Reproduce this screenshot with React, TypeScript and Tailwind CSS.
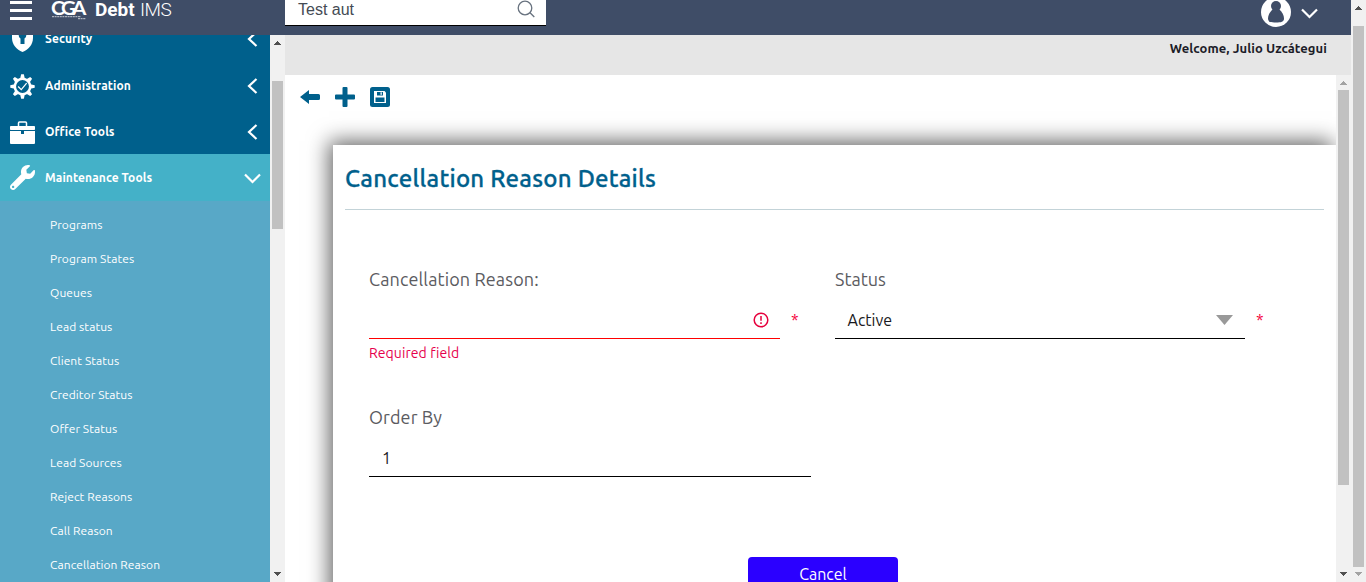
import React from "react";

const UI = "font-['Ubuntu','Noto_Sans',sans-serif]";

function ChevronLeft() {
  return (
    <svg width="11" height="16" viewBox="0 0 11 16" fill="none" stroke="#fff" strokeWidth="2.2" className="mr-[2px]">
      <path d="M9.5 1 L2 8 L9.5 15" />
    </svg>
  );
}

function ChevronDown({ className = "" }: { className?: string }) {
  return (
    <svg width="17" height="11" viewBox="0 0 17 11" fill="none" stroke="#fff" strokeWidth="2.2" className={className}>
      <path d="M1 1.5 L8.5 9 L16 1.5" />
    </svg>
  );
}

function Arrow({ up = false, color }: { up?: boolean; color: string }) {
  return (
    <svg width="7" height="4" viewBox="0 0 7 4" shapeRendering="crispEdges" className="shrink-0">
      <path d={up ? "M3 0h1v1h1v1h1v1h1v1H0V3h1V2h1V1h1z" : "M0 0h7v1H6v1H5v1H4v1H3V3H2V2H1V1H0z"} fill={color} />
    </svg>
  );
}

const ShieldIcon = () => (
  <svg width="25" height="26" viewBox="0 0 25 26" fill="none">
    <path d="M12.500 0 L23 3.500 V12 C23 18.500 18.500 23.500 12.500 26 C6.500 23.500 2 18.500 2 12 V3.500 Z" fill="#fff" />
    <path d="M12.500 6 a3.500 3.500 0 0 1 2 6.500 V18 h-4 V12.500 a3.500 3.500 0 0 1 2-6.500z" fill="#00608c" />
  </svg>
);

const GearIcon = () => (
  <svg width="25" height="25" viewBox="0 0 26 26" fill="none">
    <g fill="#fff">
      {[0, 45, 90, 135, 180, 225, 270, 315].map((a) => (
        <path key={a} transform={`rotate(${a} 13 13)`} d="M11.600 0.300 h2.800 l1 4.500 h-4.800z" />
      ))}
    </g>
    <circle cx="13" cy="13" r="8" stroke="#fff" strokeWidth="2.600" />
    <path d="M8.500 13 l3.200 3.200 L17.300 9.500" stroke="#fff" strokeWidth="1.300" />
  </svg>
);

const CaseIcon = () => (
  <svg width="25" height="23" viewBox="0 0 25 23" fill="none">
    <path d="M8.500 5 V2 Q8.500 1 9.500 1 H15.500 Q16.500 1 16.500 2 V5" stroke="#fff" strokeWidth="1.500" />
    <rect y="5" width="25" height="4" rx="0.800" fill="#fff" />
    <path d="M0 10 h11 v3 h3 v-3 h11 v12 a1 1 0 0 1 -1 1 H1 a1 1 0 0 1 -1 -1z" fill="#fff" />
    <rect x="11" y="9" width="3" height="4" fill="#00608c" />
  </svg>
);

const WrenchIcon = () => (
  <svg width="25" height="25" viewBox="0 0 512 512" fill="#fff">
    <path d="M507.730 109.100c-2.240-9.030-13.540-12.090-20.120-5.510l-74.360 74.360-67.880-11.310-11.310-67.880 74.360-74.360c6.620-6.620 3.430-17.900-5.660-20.160-47.380-11.740-99.550.91-136.580 37.930-39.640 39.640-50.550 97.100-34.050 147.200L18.740 402.760c-24.990 24.990-24.990 65.510 0 90.500 24.990 24.990 65.510 24.990 90.500 0l213.210-213.210c50.120 16.710 107.470 5.680 147.370-34.220 37.070-37.070 49.700-89.320 37.910-136.730zM64 472c-13.250 0-24-10.750-24-24 0-13.260 10.750-24 24-24s24 10.740 24 24c0 13.250-10.750 24-24 24z" />
  </svg>
);

const sections = [
  { label: "Security", icon: <ShieldIcon />, height: "h-[46px]" },
  { label: "Administration", icon: <GearIcon />, height: "h-[48px]" },
  { label: "Office Tools", icon: <CaseIcon />, height: "h-[44px]" },
];

const links = [
  "Programs",
  "Program States",
  "Queues",
  "Lead status",
  "Client Status",
  "Creditor Status",
  "Offer Status",
  "Lead Sources",
  "Reject Reasons",
  "Call Reason",
  "Cancellation Reason",
];

function Header() {
  return (
    <header className="flex h-[35px] shrink-0 items-start bg-[#3f4d67]">
      <div className="flex w-[285px] items-start">
        <div className="ml-[10px] mt-px flex w-[22px] flex-col gap-[5px]">
          <i className="h-[3px] bg-white" />
          <i className="h-[3px] bg-white" />
          <i className="h-[3px] bg-white" />
        </div>
        <svg width="36" height="20" viewBox="0 0 36 20" className="ml-[19px]">
          <text transform="scale(1.15 1)" x="0 8.800 18.200" y="15.200" fill="#fff" fontFamily="Lato" fontWeight="700" fontSize="18">CGA</text>
          <path d="M1 16.700 H30 M27 18.700 H35" stroke="#c4cad3" strokeWidth="1" strokeDasharray="2 0.600" />
        </svg>
        <div className="ml-[8px] flex font-['Roboto',sans-serif] text-[19px] leading-[20px] text-white">
          <span className="w-[45px] font-bold">Debt</span>
          <span className="font-light tracking-[-0.5px]">IMS</span>
        </div>
      </div>
      <div className="flex h-[26px] w-[261px] items-start justify-between border-b border-black bg-white pl-[13px] pr-[11px]">
        <span className="font-['Liberation_Sans',sans-serif] text-[16px] leading-[19px] text-[#444b54]">Test aut</span>
        <svg width="18" height="18" viewBox="0 0 18 18" fill="none" stroke="#68727f" strokeWidth="1.300">
          <circle cx="8" cy="8" r="6.800" />
          <path d="M12.800 12.500 L17.300 17" />
        </svg>
      </div>
      <svg width="30" height="27" viewBox="0 0 30 27" className="ml-auto">
        <circle cx="15" cy="12" r="15" fill="#fff" />
        <circle cx="15" cy="6" r="5" fill="#3f4d67" />
        <path d="M12 9 H18 C21 12 23 15 23 18.500 C23 22 20 22.500 15 22.500 C10 22.500 7 22 7 18.500 C7 15 9 12 12 9z" fill="#3f4d67" />
      </svg>
      <ChevronDown className="ml-[9.500px] mr-[33.500px] mt-[8px]" />
    </header>
  );
}

function Sidebar() {
  return (
    <aside className="flex w-[285px] shrink-0 overflow-hidden">
      <nav className="w-[270px] bg-[#00608c] text-white">
        <div className="-mt-[19px]">
          {sections.map((s) => (
            <div key={s.label} className={`${s.height} flex items-center pl-[10px] pr-[10px]`}>
              <span className="flex w-[35px]">{s.icon}</span>
              <span className="flex-1 text-[12px] font-bold leading-[16px] tracking-[0.1px]">{s.label}</span>
              <ChevronLeft />
            </div>
          ))}
        </div>
        <div className="flex h-[47px] items-center bg-[#44b1c8] pl-[10px] pr-[9px]">
          <span className="flex w-[35px]"><WrenchIcon /></span>
          <span className="flex-1 text-[12px] font-bold leading-[16px] tracking-[0.1px]">Maintenance Tools</span>
          <ChevronDown className="mt-[2px]" />
        </div>
        <div className="h-[400px] bg-[#58a8c7] pl-[50px] pt-[7px]">
          {links.map((l) => (
            <div key={l} className="flex h-[34px] items-center text-[12px] tracking-[0.08px]">{l}</div>
          ))}
        </div>
      </nav>
      <div className="flex w-[15px] flex-col items-center bg-[#f1f1f1] pb-[6px] pt-[6px]">
        <Arrow up color="#505050" />
        <i className="mt-[36px] h-[148px] w-[11px] bg-[#c1c1c1]" />
        <span className="flex-1" />
        <Arrow color="#505050" />
      </div>
    </aside>
  );
}

function Details() {
  return (
    <section className="ml-[48px] mt-[35px] h-[500px] bg-white px-3 pt-[14px] shadow-[-4px_-4px_20px_rgba(0,0,0,0.6)]">
      <h1 className="h-[51px] border-b border-[#c3d3d8] text-[24px] font-medium leading-[40px] tracking-[0.24px] text-[#00608c] [-webkit-text-stroke:0.3px_#00608c]">Cancellation Reason Details</h1>
      <div className="flex pl-6 pt-[57px]">
        <div className="w-[466px]">
          <div className="text-[18px] leading-6 tracking-[0.12px] text-[#5b5b5f]">Cancellation Reason:</div>
          <div className="mt-[11px] flex">
            <div className="flex h-[37px] w-[411px] items-center justify-end border-b border-b-[#ff0000] pr-[11px]">
              <svg width="16" height="16" viewBox="0 0 16 16" fill="none" stroke="#e6003c" strokeWidth="1.500">
                <circle cx="8" cy="8" r="6.800" />
                <path d="M8 4v4.800M8 10.200v1.800" />
              </svg>
            </div>
            <span className="ml-[11px] mt-[6px] text-[16px] leading-6 text-[#f5003d]">*</span>
          </div>
          <div className="mt-1 text-[14px] leading-5 tracking-[0.08px] text-[#e6004c]">Required field</div>
        </div>
        <div>
          <div className="text-[18px] leading-6 text-[#5b5b5f]">Status</div>
          <div className="mt-[11px] flex">
            <div className="flex h-[37px] w-[410px] items-center justify-between border-b border-black pl-[12.500px] pr-[12px] text-[16px] text-[#181820]">
              <span>Active</span>
              <svg width="17" height="10" viewBox="0 0 17 10"><path d="M0 0H17L8.500 10z" fill="#999" /></svg>
            </div>
            <span className="ml-[11px] mt-[6px] text-[16px] leading-6 text-[#f5003d]">*</span>
          </div>
        </div>
      </div>
      <div className="pl-6 pt-[42px]">
        <div className="text-[18px] leading-6 tracking-[0.1px] text-[#5b5b5f]">Order By</div>
        <div className="mt-[11px] flex h-[37px] w-[442px] items-center border-b border-black pl-[13px] text-[16px] text-[#181820]">1</div>
      </div>
      <button className="ml-[403px] mt-[80px] block h-9 w-[150px] rounded-[4px] bg-[#2b00ff] pb-[2px] text-[16px] leading-[34px] text-white">Cancel</button>
    </section>
  );
}

export default function App() {
  return (
    <div className={`${UI} flex h-[582px] w-[1366px] overflow-hidden bg-white`}>
      <div className="flex w-[1351px] flex-col">
        <Header />
        <div className="flex min-h-0 flex-1">
          <Sidebar />
          <main className="flex min-w-0 flex-1 flex-col">
            <div className="h-[40px] shrink-0 bg-[#e6e6e6] pr-[24px] pt-[3px] text-right text-[13px] font-bold leading-[20px] tracking-[0.08px] text-[#1c1c28]">Welcome, Julio Uzcátegui</div>
            <div className="flex min-h-0 flex-1">
              <div className="min-w-0 flex-1 overflow-hidden">
                <div className="flex h-[35px] items-center gap-[15px] pl-[15px] pt-[9px]">
                  <svg width="20" height="20" viewBox="0 0 20 20" fill="#00608c"><path d="M0 10 L9 3 V7 H18.500 Q20 7 20 8.500 V11.500 Q20 13 18.500 13 H9 V17z" /></svg>
                  <svg width="20" height="20" viewBox="0 0 20 20" fill="#00608c"><path d="M8.500 0h3q1 0 1 1v6.500H19q1 0 1 1v3q0 1-1 1h-6.500V19q0 1-1 1h-3q-1 0-1-1v-6.500H1q-1 0-1-1v-3q0-1 1-1h6.500V1q0-1 1-1z" /></svg>
                  <svg width="20" height="20" viewBox="0 0 20 20">
                    <rect width="20" height="20" rx="2.500" fill="#00608c" />
                    <path d="M4 4h10.500L16 5.500V16H4z" fill="#fff" />
                    <rect x="7" y="5" width="6" height="3.500" fill="#00608c" />
                    <rect x="10.500" y="5.300" width="1.300" height="2.500" fill="#fff" />
                    <rect x="5.500" y="10.500" width="9" height="4.500" fill="#00608c" />
                  </svg>
                </div>
                <Details />
              </div>
              <div className="flex w-[15px] shrink-0 flex-col items-center bg-[#f1f1f1] pb-[6px] pt-[6px]">
                <Arrow up color="#a3a3a3" />
                <i className="mt-[5px] h-[395px] w-[11px] bg-[#c1c1c1]" />
                <span className="flex-1" />
                <Arrow color="#505050" />
              </div>
            </div>
          </main>
        </div>
      </div>
      <div className="flex w-[15px] flex-col items-center bg-[#f1f1f1] pb-[6px] pt-[6px]">
        <Arrow up color="#505050" />
        <i className="mt-[16px] h-[541px] w-[11px] bg-[#c1c1c1]" />
        <span className="flex-1" />
        <Arrow color="#a3a3a3" />
      </div>
    </div>
  );
}
